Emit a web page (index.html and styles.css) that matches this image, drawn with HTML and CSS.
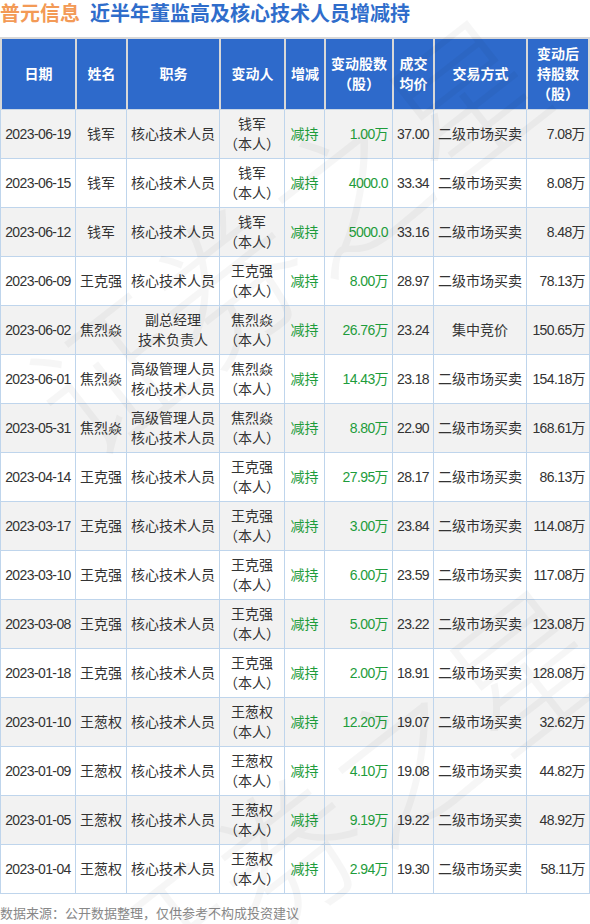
FILE: index.html
```html
<!DOCTYPE html>
<html lang="zh-CN">
<head>
    <meta charset="UTF-8">
    <meta name="viewport" content="width=device-width, initial-scale=1.0">
    <title>普元信息近半年董监高及核心技术人员增减持</title>
    <link rel="stylesheet" href="styles.css">
</head>
<body>
    <div class="page">
        <h1 class="title"><span class="stock">普元信息</span><span class="topic">近半年董监高及核心技术人员增减持</span></h1>
        <table class="trades">
            <colgroup>
                <col style="width:76px">
                <col style="width:51px">
                <col style="width:93px">
                <col style="width:65px">
                <col style="width:40px">
                <col style="width:68px">
                <col style="width:41px">
                <col style="width:93px">
                <col style="width:63px">
            </colgroup>
            <thead>
                <tr>
                    <th>日期</th>
                    <th>姓名</th>
                    <th>职务</th>
                    <th>变动人</th>
                    <th>增减</th>
                    <th>变动股数<br>（股）</th>
                    <th>成交<br>均价</th>
                    <th>交易方式</th>
                    <th>变动后<br>持股数<br>（股）</th>
                </tr>
            </thead>
            <tbody id="rows"></tbody>
        </table>
        <p class="source">数据来源：公开数据整理，仅供参考不构成投资建议</p>

        <div class="watermark" aria-hidden="true">
            <span class="wm wm-a">证券之星</span>
            <span class="wm wm-b">证券之星</span>
        </div>
    </div>

    <script>
        const trades = [
            ['2023-06-19', '钱军', '核心技术人员', '钱军', '1.00万', '37.00', '二级市场买卖', '7.08万'],
            ['2023-06-15', '钱军', '核心技术人员', '钱军', '4000.0', '33.34', '二级市场买卖', '8.08万'],
            ['2023-06-12', '钱军', '核心技术人员', '钱军', '5000.0', '33.16', '二级市场买卖', '8.48万'],
            ['2023-06-09', '王克强', '核心技术人员', '王克强', '8.00万', '28.97', '二级市场买卖', '78.13万'],
            ['2023-06-02', '焦烈焱', '副总经理<br>技术负责人', '焦烈焱', '26.76万', '23.24', '集中竞价', '150.65万'],
            ['2023-06-01', '焦烈焱', '高级管理人员<br>核心技术人员', '焦烈焱', '14.43万', '23.18', '二级市场买卖', '154.18万'],
            ['2023-05-31', '焦烈焱', '高级管理人员<br>核心技术人员', '焦烈焱', '8.80万', '22.90', '二级市场买卖', '168.61万'],
            ['2023-04-14', '王克强', '核心技术人员', '王克强', '27.95万', '28.17', '二级市场买卖', '86.13万'],
            ['2023-03-17', '王克强', '核心技术人员', '王克强', '3.00万', '23.84', '二级市场买卖', '114.08万'],
            ['2023-03-10', '王克强', '核心技术人员', '王克强', '6.00万', '23.59', '二级市场买卖', '117.08万'],
            ['2023-03-08', '王克强', '核心技术人员', '王克强', '5.00万', '23.22', '二级市场买卖', '123.08万'],
            ['2023-01-18', '王克强', '核心技术人员', '王克强', '2.00万', '18.91', '二级市场买卖', '128.08万'],
            ['2023-01-10', '王葱权', '核心技术人员', '王葱权', '12.20万', '19.07', '二级市场买卖', '32.62万'],
            ['2023-01-09', '王葱权', '核心技术人员', '王葱权', '4.10万', '19.08', '二级市场买卖', '44.82万'],
            ['2023-01-05', '王葱权', '核心技术人员', '王葱权', '9.19万', '19.22', '二级市场买卖', '48.92万'],
            ['2023-01-04', '王葱权', '核心技术人员', '王葱权', '2.94万', '19.30', '二级市场买卖', '58.11万']
        ];

        const tbody = document.getElementById('rows');
        tbody.innerHTML = trades.map(t => `
            <tr>
                <td class="num">${t[0]}</td>
                <td>${t[1]}</td>
                <td>${t[2]}</td>
                <td>${t[3]}<br>（本人）</td>
                <td class="down">减持</td>
                <td class="num right down">${t[4]}</td>
                <td class="num">${t[5]}</td>
                <td>${t[6]}</td>
                <td class="num right">${t[7]}</td>
            </tr>`).join('');
    </script>
</body>
</html>
```

FILE: styles.css
```css
body {
    margin: 0;
    background-color: #fff;
    font-family: "Liberation Sans", "Noto Sans CJK SC", sans-serif;
    color: #333;
}
.page {
    position: relative;
    width: 590px;
    height: 924px;
    overflow: hidden;
}
.title {
    margin: 0;
    height: 37px;
    line-height: 28px;
    font-size: 20px;
    font-weight: bold;
    white-space: nowrap;
}
.stock {
    color: #f39a56;
    margin-right: 10px;
}
.topic {
    color: #2f6dcb;
}
.trades {
    width: 590px;
    table-layout: fixed;
    border-collapse: separate;
    border-spacing: 0;
    font-size: 14px;
}
.trades th {
    background-color: #2e6acb;
    color: #fff;
    font-weight: bold;
    line-height: 20px;
    padding: 5px 0;
    border: 1px solid #d8d8d8;
    border-top-width: 2px;
    border-bottom-color: #c9d6e6;
}
.trades th:first-child {
    border-left-width: 2px;
}
.trades th:last-child {
    border-right-width: 2px;
}
.trades td {
    height: 40px;
    padding: 4px 3px;
    line-height: 20px;
    text-align: center;
    white-space: nowrap;
    border-right: 1px solid #bfd5ec;
    border-bottom: 1px solid #bfd5ec;
}
.trades td:first-child {
    border-left: 1px solid #bfd5ec;
}
.trades tbody tr:nth-child(odd) td {
    background-color: #f2f2f2;
}
.trades td.num {
    letter-spacing: -0.6px;
    padding-left: 0;
    padding-right: 0;
}
.trades td.right {
    text-align: right;
    padding-right: 4px;
}
.down {
    color: #1e9c3b;
}
.source {
    margin: 10px 0 0;
    font-size: 13px;
    line-height: 20px;
    color: #888;
}
.watermark {
    position: absolute;
    inset: 0;
    pointer-events: none;
}
.wm {
    position: absolute;
    font-family: "Noto Sans CJK SC", sans-serif;
    font-size: 150px;
    font-weight: 300;
    color: rgba(0, 0, 0, 0.035);
    white-space: nowrap;
    transform: rotate(-38deg);
    transform-origin: left top;
}
.wm-a {
    left: -20px;
    top: 330px;
}
.wm-b {
    left: 40px;
    top: 900px;
}
```
